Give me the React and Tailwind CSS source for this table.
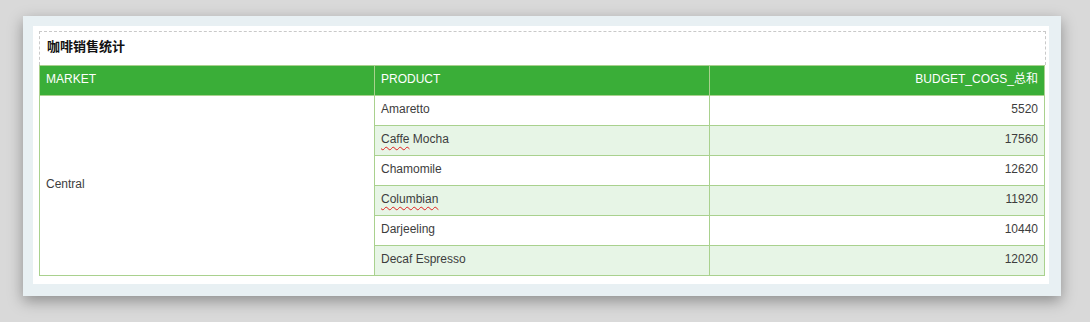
import React from "react";

/* ------------------ DATA ------------------ */
const rows = [
  { product: "Amaretto", value: 5520 },
  { product: "Caffe Mocha", value: 17560, typo: "Caffe", rest: " Mocha" },
  { product: "Chamomile", value: 12620 },
  { product: "Columbian", value: 11920, typo: "Columbian", rest: "" },
  { product: "Darjeeling", value: 10440 },
  { product: "Decaf Espresso", value: 12020 },
];

const cell = "border border-[#a9d18e] h-[30px] px-[6px] pb-[3px] align-middle";

const ProductText = ({ row }) =>
  row.typo ? (
    <span>
      <span className="underline decoration-wavy decoration-[#e02020] decoration-1 underline-offset-[3px]">
        {row.typo}
      </span>
      {row.rest}
    </span>
  ) : (
    row.product
  );

/* ------------------ COMPONENT ------------------ */
const App = () => {
  return (
    <div
      className="w-[1090px] h-[322px] bg-[#d9d9d9] pt-[16px] pl-[23px] overflow-hidden"
      style={{ fontFamily: '"Liberation Sans", Arial, "Noto Sans CJK SC", sans-serif' }}
    >
      {/* ---------- PANEL ---------- */}
      <div className="w-[1038px] h-[280px] bg-[#e8f0f3] pt-[10px] pl-[10px] shadow-[0_5px_14px_rgba(0,0,0,0.35)]">
        <div className="w-[1016px] h-[258px] bg-white pt-[5px] pl-[6px]">
          {/* title */}
          <div className="w-[1007px] h-[34px] border border-b-0 border-dashed border-[#c9c9c9] flex items-center pl-[7px] pb-[3px]">
            <span className="text-[13px] font-bold text-[#111]">咖啡销售统计</span>
          </div>

          {/* ---------- TABLE ---------- */}
          <table className="w-[1006px] border-collapse table-fixed text-[12px] text-[#3d3d3d]">
            <thead>
              <tr className="bg-[#3aae38] text-white">
                <th className={`${cell} font-normal text-left`}>MARKET</th>
                <th className={`${cell} font-normal text-left`}>PRODUCT</th>
                <th className={`${cell} font-normal text-right`}>BUDGET_COGS_总和</th>
              </tr>
            </thead>
            <tbody>
              {rows.map((row, i) => (
                <tr key={row.product} className={i % 2 === 1 ? "bg-[#e7f5e6]" : "bg-white"}>
                  {i === 0 && (
                    <td rowSpan={rows.length} className={`${cell} bg-white`}>
                      Central
                    </td>
                  )}
                  <td className={cell}>
                    <ProductText row={row} />
                  </td>
                  <td className={`${cell} text-right`}>{row.value}</td>
                </tr>
              ))}
            </tbody>
          </table>
        </div>
      </div>
    </div>
  );
};

export default App;
